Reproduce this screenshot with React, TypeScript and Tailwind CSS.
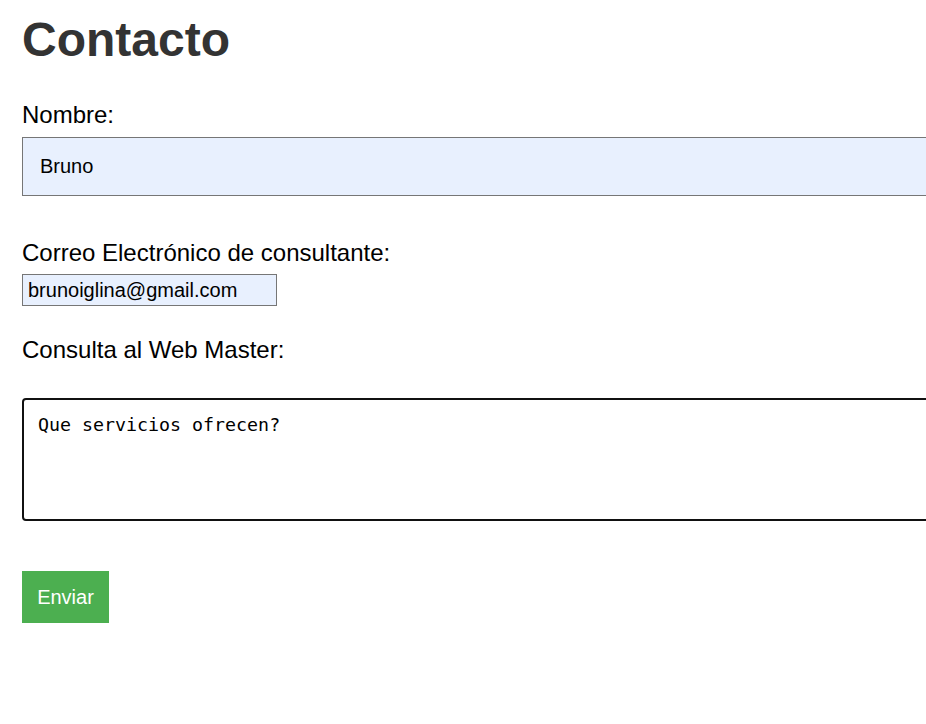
import React from 'react';

const App: React.FC = () => {
    return (
        <div className="min-h-[724px] w-full overflow-hidden bg-white font-['Liberation_Sans',Arial,sans-serif] text-black">
            <div className="flex flex-col items-start pl-[22px] pt-[16px]">
                <h1 className="text-[48px] leading-[48px] font-bold text-[#333333]">Contacto</h1>

                <label className="mt-[37px] text-[24px] leading-[28px]">Nombre:</label>
                <input
                    type="text"
                    defaultValue="Bruno"
                    className="mt-[8px] box-border h-[59px] w-[calc(100%+40px)] border border-[#767676] bg-[#e8f0fe] pl-[17px] text-[20px] text-black outline-none"
                />

                <label className="mt-[43px] text-[24px] leading-[28px]">Correo Electrónico de consultante:</label>
                <input
                    type="email"
                    defaultValue="brunoiglina@gmail.com"
                    className="mt-[7px] box-border h-[32px] w-[255px] border border-[#767676] bg-[#e8f0fe] pl-[5px] text-[20px] text-black outline-none"
                />

                <label className="mt-[30px] text-[24px] leading-[28px]">Consulta al Web Master:</label>
                <textarea
                    defaultValue="Que servicios ofrecen?"
                    className="mt-[34px] box-border h-[123px] w-[calc(100%+40px)] resize-none rounded-[4px] border-[2.5px] border-[#111111] bg-white pl-[14px] pt-[14px] font-['DejaVu_Sans_Mono','Liberation_Mono',monospace] text-[18.3px] leading-[22px] text-black outline-none"
                />

                <button className="mt-[50px] box-border h-[52px] w-[87px] bg-[#4caf50] text-[20px] text-white">
                    Enviar
                </button>
            </div>
        </div>
    );
};

export default App;
